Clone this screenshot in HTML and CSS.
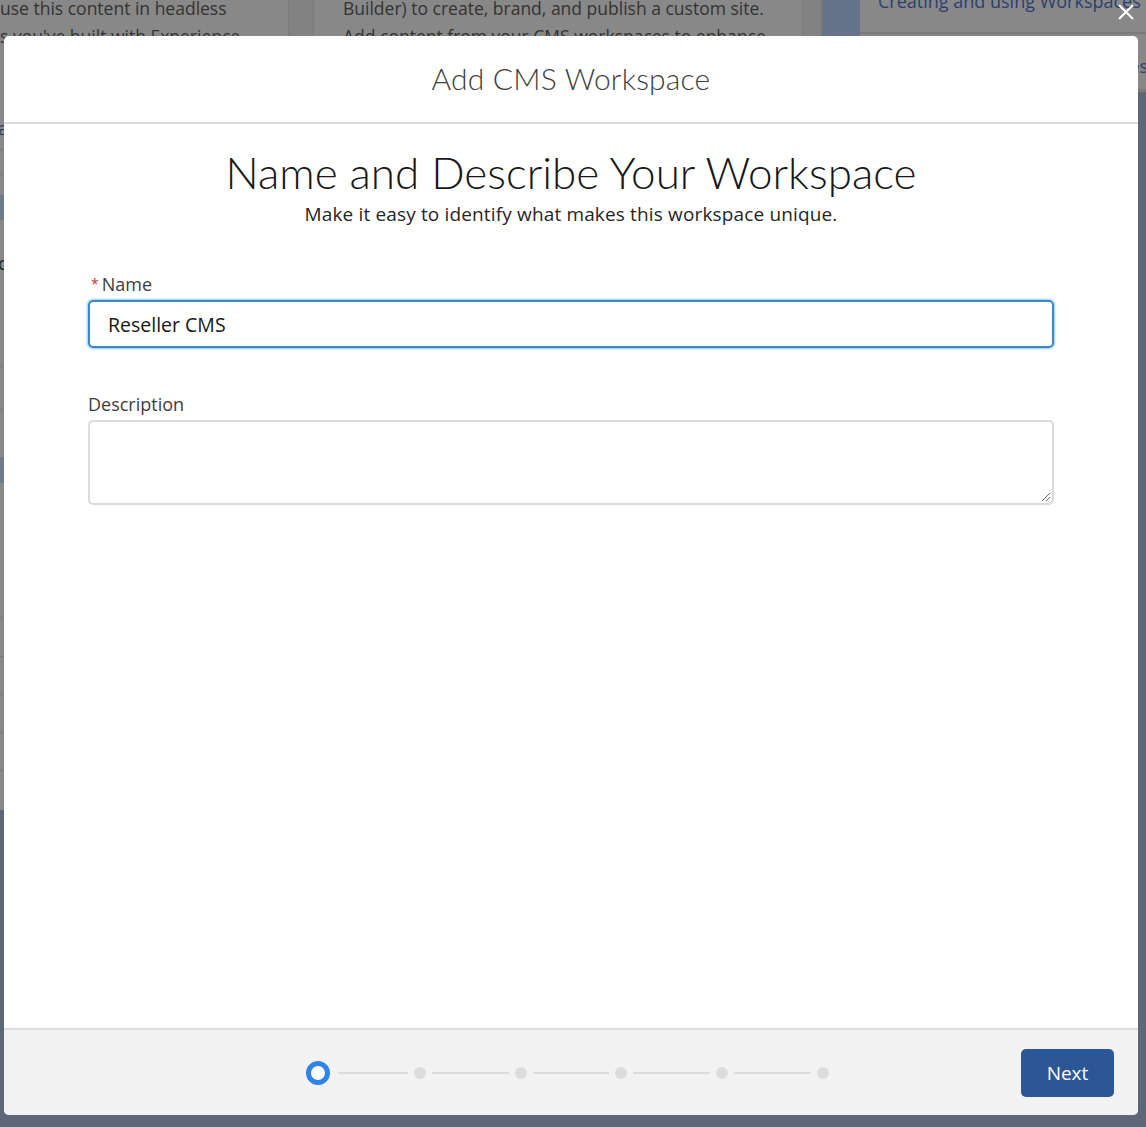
FILE: index.html
```html
<!DOCTYPE html>
<html lang="en">
<head>
<meta charset="utf-8">
<title>Add CMS Workspace</title>
<link rel="stylesheet" href="styles.css">
</head>
<body>
<div class="page">
  <div class="col-left">
    <div class="block top">
      <p class="bg-text">use this content in headless</p>
      <p class="bg-text">s you've built with Experience</p>
      <span class="edge-char a">a</span>
    </div>
    <div class="block h25"></div>
    <div class="block h20 noline"></div>
    <div class="block h25 tint noline"></div>
    <div class="block h147"><span class="edge-char c">c</span></div>
    <div class="block h43"></div>
    <div class="block h47 noline"></div>
    <div class="block h26 tint noline"></div>
    <div class="block h135"></div>
    <div class="block h39"></div>
    <div class="block h38"></div>
    <div class="block h38"></div>
    <div class="block h38"></div>
    <div class="block h39 noline"></div>
  </div>
  <div class="gutter"></div>
  <div class="col-mid">
    <p class="bg-text">Builder) to create, brand, and publish a custom site.</p>
    <p class="bg-text">Add content from your CMS workspaces to enhance</p>
  </div>
  <div class="gutter"></div>
  <div class="col-rail"></div>
  <div class="col-right">
    <div class="link-row"><span class="bg-link">Creating and using Workspaces</span></div>
    <div class="plain-row"><span class="bg-link-2">Managing Workspaces</span></div>
  </div>
</div>

<button class="close" aria-label="Close">
  <svg viewBox="0 0 20 20" width="18" height="18"><path d="M3 3 L17 17 M17 3 L3 17" stroke="#fff" stroke-width="2.4" stroke-linecap="round" fill="none"/></svg>
</button>

<section class="modal" role="dialog">
  <header class="modal-header">
    <h2 class="modal-title">Add CMS Workspace</h2>
  </header>
  <div class="modal-body">
    <h1 class="step-title">Name and Describe Your Workspace</h1>
    <p class="step-sub">Make it easy to identify what makes this workspace unique.</p>
    <div class="form">
      <div class="field">
        <label class="label"><abbr class="req">*</abbr>Name</label>
        <div class="input focused">Reseller CMS</div>
      </div>
      <div class="field">
        <label class="label">Description</label>
        <div class="textarea">
          <svg class="grip" viewBox="0 0 12 12" width="12" height="12"><path d="M11 3 L3 11 M11 7 L7 11" stroke="#6b6b6b" stroke-width="1" fill="none"/></svg>
        </div>
      </div>
    </div>
  </div>
  <footer class="modal-footer">
    <div class="progress">
      <span class="step current"></span>
      <span class="bar first"></span>
      <span class="step"></span>
      <span class="bar"></span>
      <span class="step"></span>
      <span class="bar"></span>
      <span class="step"></span>
      <span class="bar"></span>
      <span class="step"></span>
      <span class="bar"></span>
      <span class="step"></span>
    </div>
    <button class="btn-next">Next</button>
  </footer>
</section>
</body>
</html>
```

FILE: styles.css
```css
* { box-sizing: border-box; }
html, body { margin: 0; padding: 0; }
body {
  width: 1146px;
  height: 1127px;
  overflow: hidden;
  background: #5d6777;
  font-family: "Open Sans", "Lato", sans-serif;
  color: #3e3e3c;
  position: relative;
}

/* dimmed background page */
.page {
  display: flex;
  align-items: flex-start;
  height: 1127px;
}
.col-left {
  width: 288px;
  flex-shrink: 0;
  background: #888888;
  display: flex;
  flex-direction: column;
  overflow: hidden;
}
.block { border-bottom: 1px solid #7a7a7a; position: relative; }
.block.noline { border-bottom: 0; }
.block.top { height: 150px; }
.h20 { height: 20px; } .h25 { height: 25px; } .h26 { height: 26px; }
.h38 { height: 38px; } .h39 { height: 39px; } .h43 { height: 43px; }
.h47 { height: 47px; } .h135 { height: 135px; } .h147 { height: 147px; }
.block.tint { background: #6f7a8b; }
.edge-char {
  position: absolute;
  left: -2px;
  font-size: 18px;
  line-height: 20px;
  color: #2f3a55;
}
.edge-char.a { top: 118px; }
.edge-char.c { top: 33px; color: #222; }

.bg-text {
  margin: 0;
  font-size: 17.5px;
  line-height: 28px;
  color: #333;
  white-space: nowrap;
}
.col-left .bg-text:first-child, .col-mid .bg-text:first-child { margin-top: -6px; }

.gutter {
  width: 26px;
  flex-shrink: 0;
  height: 110px;
  background: #828282;
  border-left: 1px solid #7a7a7a;
  border-right: 1px solid #7a7a7a;
}
.col-mid {
  width: 488px;
  flex-shrink: 0;
  height: 110px;
  background: #888888;
  padding-left: 29px;
  overflow: hidden;
}
.col-mid + .gutter { width: 20px; }
.col-rail { width: 38px; flex-shrink: 0; height: 110px; background: #67738a; }
.col-right {
  flex: 1;
  min-width: 0;
  height: 92px;
  background: #888888;
  border-bottom: 3px solid #7b7b7b;
  overflow: hidden;
}
.link-row {
  height: 34px;
  border-bottom: 2px solid #7a7a7a;
  padding-left: 18px;
  overflow: hidden;
}
.bg-link {
  display: block;
  font-size: 18px;
  line-height: 24px;
  margin-top: -11px;
  color: #2b3f6e;
  white-space: nowrap;
}
.plain-row { padding: 20px 0 0 100px; font-size: 18px; line-height: 24px; color: #2b3f6e; white-space: nowrap; }

/* close */
.close {
  position: absolute;
  top: 2px;
  right: 10px;
  width: 20px;
  height: 20px;
  padding: 0;
  border: 0;
  background: transparent;
  display: flex;
  align-items: center;
  justify-content: center;
}

/* modal */
.modal {
  position: absolute;
  left: 4px;
  top: 36px;
  width: 1134px;
  height: 1079px;
  background: #fff;
  border-radius: 5px;
  display: flex;
  flex-direction: column;
  overflow: hidden;
}
.modal-header {
  height: 88px;
  border-bottom: 2px solid #dddbda;
  display: flex;
  align-items: center;
  justify-content: center;
  padding-bottom: 2px;
}
.modal-title {
  margin: 0;
  font-family: "Lato", sans-serif;
  font-size: 30px;
  font-weight: 300;
  color: #3e3e3c;
  letter-spacing: 0.2px;
}
.modal-body {
  flex: 1;
  padding: 22px 84px 0;
}
.step-title {
  margin: 0;
  text-align: center;
  font-family: "Lato", sans-serif;
  font-size: 44px;
  line-height: 52px;
  font-weight: 300;
  color: #181818;
}
.step-sub {
  margin: 3px 0 0;
  text-align: center;
  font-size: 19px;
  line-height: 26px;
  letter-spacing: 0.15px;
  color: #262626;
}
.form { padding-top: 46px; display: flex; flex-direction: column; gap: 45px; }
.field { display: flex; flex-direction: column; gap: 5px; }
.label { font-size: 18px; line-height: 22px; color: #3e3e3c; }
.req { color: #c23934; text-decoration: none; font-size: 14px; margin-right: 3px; margin-left: 3px; vertical-align: 2px; }
.input {
  height: 48px;
  border: 2px solid #3d86c8;
  border-radius: 5px;
  box-shadow: 0 0 3px #1b96ff;
  padding: 0 18px;
  display: flex;
  align-items: center;
  font-size: 19.5px;
  color: #181818;
}
.textarea {
  height: 85px;
  border: 2px solid #dddbda;
  border-radius: 5px;
  position: relative;
}
.grip { position: absolute; right: 1px; bottom: 1px; }

.modal-footer {
  height: 87px;
  border-top: 2px solid #dddbda;
  background: #f3f2f2;
  display: flex;
  align-items: center;
  padding: 0 24px 0 302px;
  justify-content: space-between;
}
.progress { display: flex; align-items: center; gap: 6px; }
.step {
  width: 12px;
  height: 12px;
  border-radius: 50%;
  background: #dcdcdc;
}
.step.current {
  width: 24px;
  height: 24px;
  background: #fff;
  border: 5px solid #2e84ea;
}
.bar { width: 76.7px; height: 2px; background: #dcdcdc; }
.bar.first { width: 70px; margin-left: 2px; }
.btn-next {
  width: 93px;
  height: 48px;
  border: 0;
  border-radius: 5px;
  background: #2b5797;
  color: #fff;
  font-family: inherit;
  font-size: 19px;
  padding: 0;
}
```
